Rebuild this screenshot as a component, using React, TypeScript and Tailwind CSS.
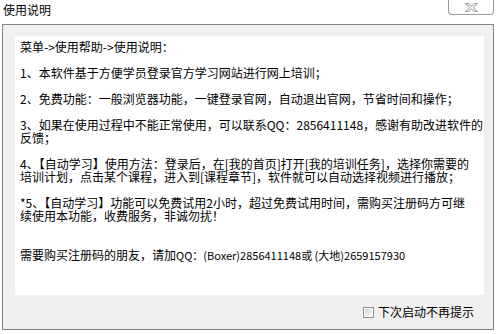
import React from "react";

const lines: string[] = [
  "菜单->使用帮助->使用说明：",
  "",
  "1、本软件基于方便学员登录官方学习网站进行网上培训；",
  "",
  "2、免费功能：一般浏览器功能，一键登录官网，自动退出官网，节省时间和操作；",
  "",
  "3、如果在使用过程中不能正常使用，可以联系QQ：2856411148，感谢有助改进软件的",
  "反馈；",
  "",
  "4、【自动学习】使用方法：登录后，在[我的首页]打开[我的培训任务]，选择你需要的",
  "培训计划，点击某个课程，进入到[课程章节]，软件就可以自动选择视频进行播放；",
  "",
  "*5、【自动学习】功能可以免费试用2小时，超过免费试用时间，需购买注册码方可继",
  "续使用本功能，收费服务，非诚勿扰！",
  "",
  "",
];

export default function App() {
  return (
    <div className="w-[497px] h-[334px] bg-white overflow-hidden text-black font-['Noto_Sans_CJK_SC',sans-serif] text-[12px]">
      {/* title bar */}
      <div className="h-[24px] flex items-start justify-between">
        <span className="ml-[3px] mt-[3px] leading-[14px]">使用说明</span>
        <div className="mr-[3px] w-[46px] h-[15px] border border-t-0 border-[#9b9b9b] rounded-b-[4px] bg-white flex items-center justify-center">
          <svg width="13" height="9" viewBox="0 0 13 9">
            <polygon
              points="0.5,0.5 3.5,0.5 6.5,3 9.5,0.5 12.5,0.5 8.2,4.5 12.5,8.5 9.5,8.5 6.5,6 3.5,8.5 0.5,8.5 4.8,4.5"
              fill="#f4f4f4"
              stroke="#8c8c8c"
              strokeWidth="0.9"
              strokeLinejoin="round"
            />
          </svg>
        </div>
      </div>
      {/* main frame */}
      <div className="ml-[2px] mr-[3px] h-[306px] border border-[#858585] bg-[#f0f0f0] flex flex-col">
        <div className="mt-[11px] ml-[12px] mr-[9px] h-[259px] bg-white pl-[5px] pt-[4px] flex flex-col">
          {lines.map((l, i) => (
            <div key={i} className="h-[13px] leading-[13px] whitespace-nowrap">
              {l}
            </div>
          ))}
          <div className="h-[13px] leading-[13px] whitespace-nowrap">
            需要购买注册码的朋友，请加
            <span className="text-[11px]">QQ：(Boxer)2856411148或 (大地)2659157930</span>
          </div>
        </div>
        <div className="flex-1 flex items-center justify-end pr-[19px]">
          <div className="w-[11px] h-[11px] border border-[#8e8f8f] bg-white p-[1px] mr-[4px]">
            <div className="w-full h-full bg-linear-to-br from-[#d8d8d8] to-[#f6f6f6]" />
          </div>
          <span className="leading-[14px]">下次启动不再提示</span>
        </div>
      </div>
    </div>
  );
}
